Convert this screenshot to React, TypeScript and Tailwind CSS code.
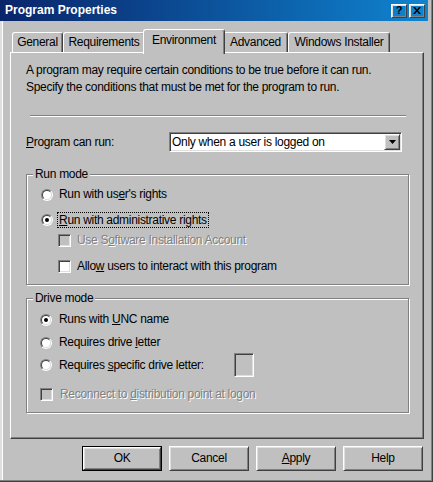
import type { ReactNode } from "react";

const raised =
  "border border-t-white border-l-white border-r-[#404040] border-b-[#404040] shadow-[inset_1px_1px_0_#dfdfdf,inset_-1px_-1px_0_#808080]";
const sunken =
  "border border-t-[#808080] border-l-[#808080] border-r-white border-b-white shadow-[inset_1px_1px_0_#404040,inset_-1px_-1px_0_#dfdfdf]";

function Radio({ checked }: { checked?: boolean }) {
  return (
    <span className="shrink-0 w-[12px] h-[12px] rounded-full border border-t-[#808080] border-l-[#808080] border-r-white border-b-white">
      <span className="flex items-center justify-center w-full h-full rounded-full bg-white border border-t-[#404040] border-l-[#404040] border-r-[#dfdfdf] border-b-[#dfdfdf]">
        {checked && <span className="w-[4px] h-[4px] rounded-full bg-black" />}
      </span>
    </span>
  );
}

function Check({ disabled }: { disabled?: boolean }) {
  return (
    <span
      className={`shrink-0 w-[13px] h-[13px] ${sunken} ${disabled ? "bg-[#c0c0c0]" : "bg-white"}`}
    />
  );
}

function Group({ label, className, children }: { label: string; className: string; children: ReactNode }) {
  return (
    <div
      className={`relative w-[383px] border border-[#808080] shadow-[1px_1px_0_#fff,inset_1px_1px_0_#fff] flex flex-col ${className}`}
    >
      <span className="absolute -top-[8px] left-[6px] px-[2px] bg-[#c0c0c0] leading-[14px]">{label}</span>
      {children}
    </div>
  );
}

const dim = "text-[#808080] [text-shadow:1px_1px_0_#fff]";

function Tab({ label, w, active }: { label: string; w: string; active?: boolean }) {
  if (active) {
    return (
      <div
        className={`relative z-10 -mx-[2px] -mb-[2px] h-[25px] ${w} flex items-center justify-center pb-[4px] bg-[#c0c0c0] border-t border-l border-r border-t-white border-l-white border-r-[#404040] rounded-t-[3px] shadow-[inset_-1px_0_0_#808080]`}
      >
        {label}
      </div>
    );
  }
  return (
    <div
      className={`h-[20px] ${w} flex items-center justify-center bg-[#c0c0c0] border-t border-l border-r border-t-white border-l-white border-r-[#404040] rounded-t-[3px] shadow-[inset_-1px_0_0_#808080]`}
    >
      {label}
    </div>
  );
}

function Button({ children, def }: { children: ReactNode; def?: boolean }) {
  if (def) {
    return (
      <div className="w-[80px] h-[25px] border border-black">
        <div className={`w-full h-full flex items-center justify-center ${raised}`}>{children}</div>
      </div>
    );
  }
  return <div className={`w-[80px] h-[25px] flex items-center justify-center ${raised}`}>{children}</div>;
}

export default function App() {
  return (
    <div
      className="w-[433px] h-[482px] bg-[#c0c0c0] text-black text-[12px] leading-[17px] tracking-[-0.3px] border-r border-b border-[#404040] shadow-[inset_-1px_-1px_0_#808080,inset_2px_0_0_#dfdfdf,inset_3px_0_0_#fff] flex flex-col overflow-hidden"
      style={{ fontFamily: '"Liberation Sans", Arial, sans-serif' }}
    >
      {/* title bar */}
      <div className="h-[21px] mr-[4px] flex items-center justify-between pl-[5px] pr-[3px] bg-gradient-to-r from-[#0a246a] to-[#1084d0]">
        <span className="text-white font-bold text-[12px] tracking-normal">Program Properties</span>
        <div className="flex gap-[2px]">
          <div className={`w-[16px] h-[14px] flex items-center justify-center text-[11px] font-bold leading-none ${raised}`}>?</div>
          <div className={`w-[16px] h-[14px] flex items-center justify-center ${raised}`}>
            <svg width="8" height="7" viewBox="0 0 8 7">
              <path d="M0 0h2l2 2.5L6 0h2L5 3.5 8 7H6L4 4.5 2 7H0l3-3.5z" fill="#000" />
            </svg>
          </div>
        </div>
      </div>

      {/* tabs */}
      <div className="mt-[8px] ml-[12px] h-[23px] flex items-end">
        <Tab label="General" w="w-[51px]" />
        <Tab label="Requirements" w="w-[82px]" />
        <Tab label="Environment" w="w-[82px]" active />
        <Tab label="Advanced" w="w-[65px]" />
        <Tab label="Windows Installer" w="w-[102px]" />
      </div>

      {/* panel */}
      <div
        className="ml-[10px] w-[414px] h-[387px] border border-t-white border-l-white border-r-[#404040] border-b-[#404040] shadow-[inset_-1px_-1px_0_#808080] pl-[15px] pt-[9px] flex flex-col"
      >
        <p>
          A program may require certain conditions to be true before it can run.
          <br />
          Specify the conditions that must be met for the program to run.
        </p>
        <div className="mt-[19px] ml-[4px] w-[376px] h-[2px] border-t border-t-[#808080] border-b border-b-white" />

        <div className="mt-[15px] flex items-center h-[20px]">
          <span className="w-[143px]">
            <span className="underline">P</span>rogram can run:
          </span>
          <div className={`w-[233px] h-[20px] bg-white flex items-center ${sunken}`}>
            <span className="flex-1 pl-[2px]">Only when a user is logged on</span>
            <div className={`mr-[1px] w-[16px] h-[16px] bg-[#c0c0c0] flex items-center justify-center ${raised}`}>
              <svg width="7" height="4" viewBox="0 0 7 4">
                <path d="M0 0h7L3.5 4z" fill="#000" />
              </svg>
            </div>
          </div>
        </div>

        <Group label="Run mode" className="mt-[22px] h-[111px] pt-[11px]">
          <div className="h-[17px] flex items-center pl-[14px] gap-[6px]">
            <Radio />
            <span>
              Run with us<span className="underline">e</span>r's rights
            </span>
          </div>
          <div className="mt-[8px] h-[17px] flex items-center pl-[14px] gap-[4px]">
            <Radio checked />
            <span className="border border-dotted border-black px-[1px] leading-[14px]">
              <span className="underline">R</span>un with administrative rights
            </span>
          </div>
          <div className="mt-[4px] h-[17px] flex items-center pl-[31px] gap-[6px]">
            <Check disabled />
            <span className={dim}>
              Use S<span className="underline">o</span>ftware Installation Account
            </span>
          </div>
          <div className="mt-[9px] h-[17px] flex items-center pl-[31px] gap-[6px]">
            <Check />
            <span>
              Allo<span className="underline">w</span> users to interact with this program
            </span>
          </div>
        </Group>

        <Group label="Drive mode" className="mt-[13px] h-[115px] pt-[12px]">
          <div className="h-[17px] flex items-center pl-[13px] gap-[7px]">
            <Radio checked />
            <span>
              Runs with <span className="underline">U</span>NC name
            </span>
          </div>
          <div className="mt-[6px] h-[17px] flex items-center pl-[13px] gap-[7px]">
            <Radio />
            <span>
              Requires drive <span className="underline">l</span>etter
            </span>
          </div>
          <div className="mt-[2px] h-[24px] flex items-center pl-[13px] gap-[7px]">
            <Radio />
            <span className="w-[168px]">
              Requires <span className="underline">s</span>pecific drive letter:
            </span>
            <div className={`w-[20px] h-[24px] bg-[#c0c0c0] ${sunken}`} />
          </div>
          <div className="mt-[9px] h-[17px] flex items-center pl-[13px] gap-[7px]">
            <Check disabled />
            <span className={dim}>
              Reconnect to <span className="underline">d</span>istribution point at logon
            </span>
          </div>
        </Group>
      </div>

      {/* buttons */}
      <div className="mt-[7px] flex justify-end gap-[7px] pr-[9px]">
        <Button def>OK</Button>
        <Button>Cancel</Button>
        <Button>
          <span>
            <span className="underline">A</span>pply
          </span>
        </Button>
        <Button>Help</Button>
      </div>
    </div>
  );
}
